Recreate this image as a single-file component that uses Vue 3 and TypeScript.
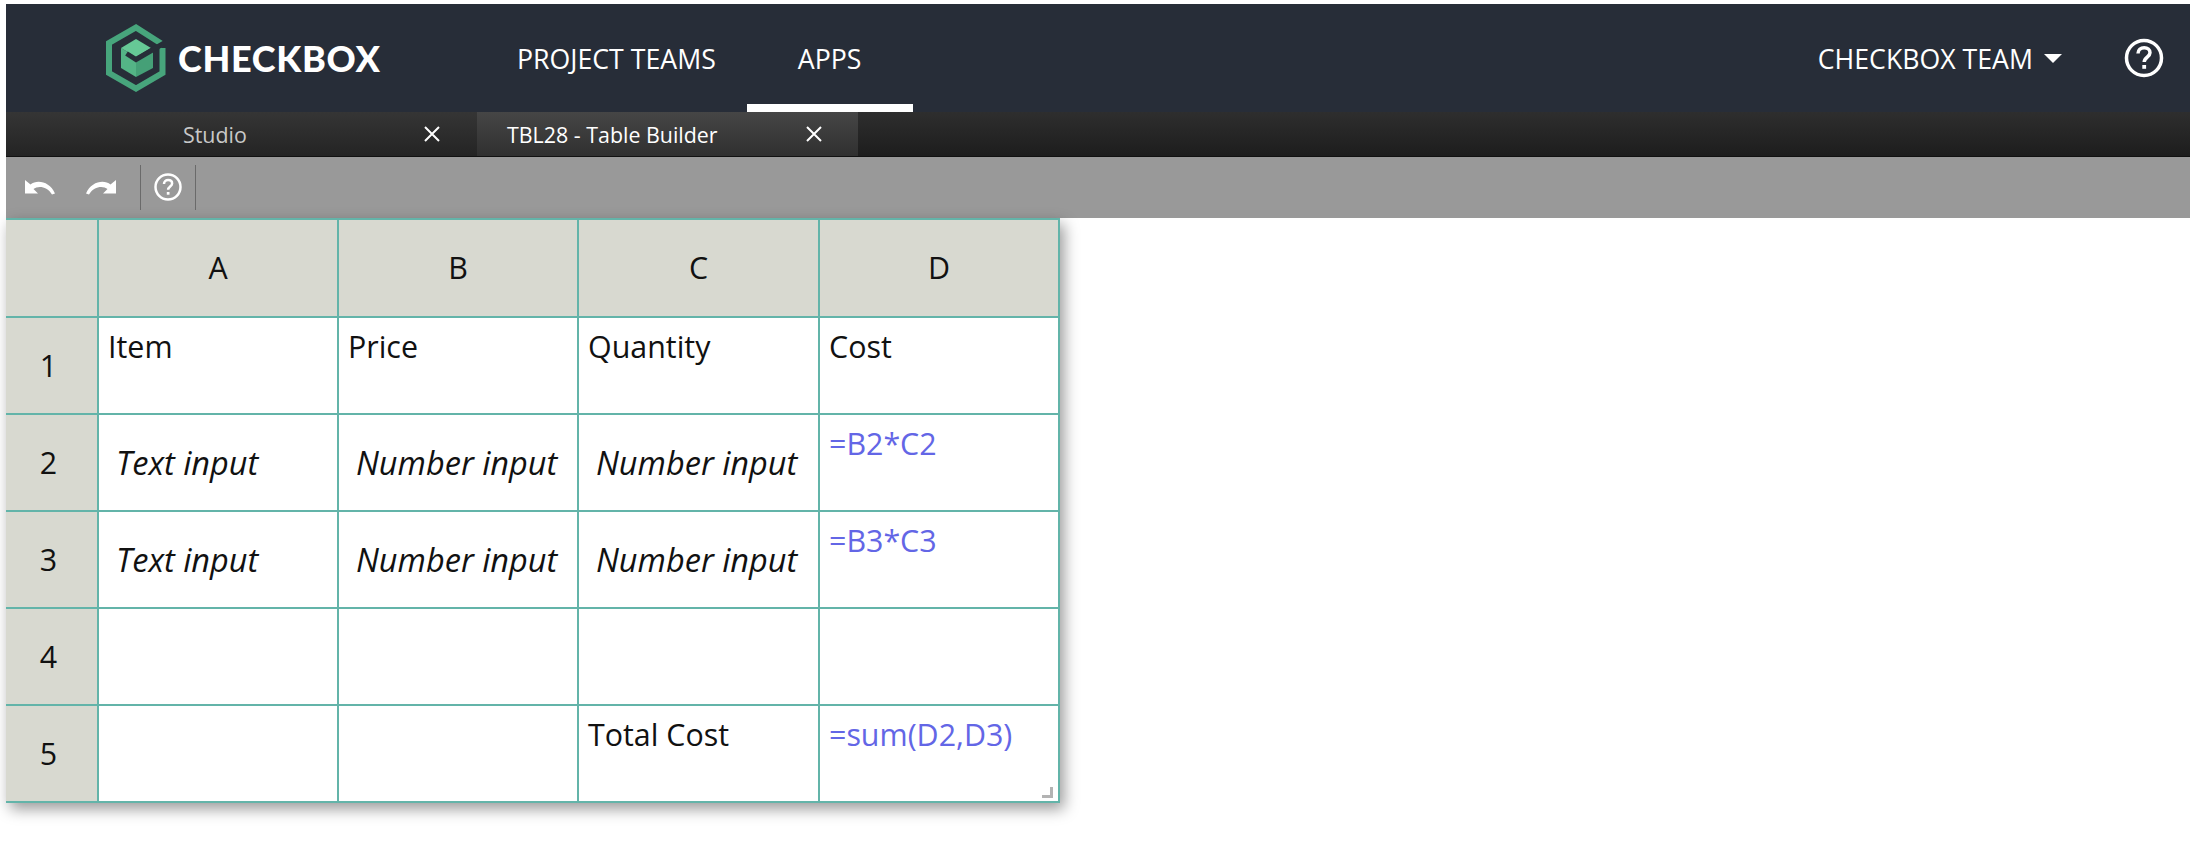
<script setup lang="ts">
type CellKind = "text" | "input" | "formula" | "empty";

interface Cell {
  kind: CellKind;
  value: string;
}

const columns = ["A", "B", "C", "D"];

const t = (value: string): Cell => ({ kind: "text", value });
const i = (value: string): Cell => ({ kind: "input", value });
const f = (value: string): Cell => ({ kind: "formula", value });
const e: Cell = { kind: "empty", value: "" };

const rows: Cell[][] = [
  [t("Item"), t("Price"), t("Quantity"), t("Cost")],
  [i("Text input"), i("Number input"), i("Number input"), f("=B2*C2")],
  [i("Text input"), i("Number input"), i("Number input"), f("=B3*C3")],
  [e, e, e, e],
  [e, e, t("Total Cost"), f("=sum(D2,D3)")],
];
</script>

<template>
  <div class="app">
    <header class="topbar">
      <div class="brand">
        <svg class="logo" viewBox="0 0 60 68" aria-hidden="true">
          <path
            d="M57.500 21 30 3.500 3 19v30l27 15.500L56.500 49V24"
            fill="none"
            stroke="#47a57c"
            stroke-width="6"
          />
          <path fill="#54b486" d="M15 24 30 33v20l-15-9z" />
          <path fill="#45a077" d="M30 33 47 24v20l-17 9z" />
          <path fill="#66c896" d="M30 15 45 24 30 33 15 24z" />
          <path d="M20.500 29.500 30 35.500 60 18" fill="none" stroke="#272d38" stroke-width="5" />
        </svg>
        <span class="brand-name">CHECKBOX</span>
      </div>
      <nav class="nav">
        <a class="nav-link">PROJECT TEAMS</a>
        <a class="nav-link is-active">APPS</a>
      </nav>
      <div class="account">
        <span>CHECKBOX TEAM</span>
        <span class="caret"></span>
      </div>
      <svg class="help-main" viewBox="0 0 40 40" aria-hidden="true">
        <circle cx="20" cy="20" r="17.500" fill="none" stroke="#fff" stroke-width="3.500" />
        <path
          d="M14 15.500c0-3.500 2.600-5.800 6.200-5.800 3.400 0 5.800 2.100 5.800 5 0 4.200-5.800 4.600-5.800 9.300"
          fill="none"
          stroke="#fff"
          stroke-width="3.500"
        />
        <rect x="18.300" y="27" width="3.800" height="3.800" fill="#fff" />
      </svg>
    </header>

    <div class="tabs">
      <div class="tab tab-studio">
        <span class="tab-label">Studio</span>
        <svg class="tab-close" viewBox="0 0 16 16" aria-hidden="true">
          <path d="M1 1l14 14M15 1 1 15" stroke="#fff" stroke-width="2" />
        </svg>
      </div>
      <div class="tab tab-active">
        <span class="tab-label">TBL28 - Table Builder</span>
        <svg class="tab-close" viewBox="0 0 16 16" aria-hidden="true">
          <path d="M1 1l14 14M15 1 1 15" stroke="#fff" stroke-width="2" />
        </svg>
      </div>
    </div>

    <div class="toolbar">
      <svg class="tool-icon undo" viewBox="0 0 30 16" aria-hidden="true">
        <path d="M0 1v13.500h13L8.500 10C13 6.500 22 7 27 15.500l3-1C25 2.500 12 0 5.500 5.500z" fill="#fff" />
      </svg>
      <svg class="tool-icon redo" viewBox="0 0 30 16" aria-hidden="true">
        <path d="M30 1v13.500H17l4.500-4.500C17 6.500 8 7 3 15.500l-3-1C5 2.500 18 0 24.500 5.500z" fill="#fff" />
      </svg>
      <span class="tool-sep"></span>
      <svg class="tool-help" viewBox="0 0 28 28" aria-hidden="true">
        <circle cx="14" cy="14" r="12.500" fill="none" stroke="#fff" stroke-width="2.500" />
        <path
          d="M10 11c0-2.400 1.800-4 4.100-4 2.300 0 4 1.400 4 3.400 0 2.900-4 3.200-4 6.400"
          fill="none"
          stroke="#fff"
          stroke-width="2.500"
        />
        <rect x="12.800" y="19" width="2.700" height="2.700" fill="#fff" />
      </svg>
      <span class="tool-sep"></span>
    </div>

    <div class="sheet">
      <div class="cell head row-head"></div>
      <div v-for="col in columns" :key="col" class="cell head">{{ col }}</div>
      <template v-for="(row, r) in rows" :key="r">
        <div class="cell head row-head">{{ r + 1 }}</div>
        <div v-for="(cell, c) in row" :key="c" class="cell" :class="`is-${cell.kind}`">
          {{ cell.value }}
        </div>
      </template>
      <span class="grip"></span>
    </div>
  </div>
</template>

<style scoped>
.app {
  display: flex;
  flex-direction: column;
  height: 852px;
  padding: 4px 2px 0 6px;
  box-sizing: border-box;
  font-family: "Open Sans", "Noto Sans", sans-serif;
  color: #111;
}

.topbar {
  display: flex;
  align-items: stretch;
  flex: 0 0 108px;
  background: #272d38;
  color: #fff;
}

.brand {
  display: flex;
  align-items: center;
  gap: 12px;
  margin-left: 100px;
  width: 411px;
}

.logo {
  width: 60px;
  height: 68px;
}

.brand-name {
  font-family: Lato, "Open Sans", sans-serif;
  font-weight: 900;
  font-size: 36px;
  letter-spacing: 0.7px;
}

.nav {
  display: flex;
  gap: 31px;
}

.nav-link {
  display: flex;
  align-items: center;
  height: 108px;
  padding-top: 8px;
  box-sizing: border-box;
  font-size: 26.7px;
  border-bottom: 8px solid transparent;
}

.nav-link.is-active {
  padding: 8px 52px 0 51px;
  border-bottom-color: #fff;
}

.account {
  display: flex;
  align-items: center;
  gap: 11px;
  margin-left: auto;
  font-size: 26.7px;
}

.caret {
  width: 0;
  height: 0;
  border-left: 9px solid transparent;
  border-right: 9px solid transparent;
  border-top: 9px solid #fff;
}

.help-main {
  align-self: center;
  width: 40px;
  height: 40px;
  margin: 0 26px 0 62px;
}

.tabs {
  display: flex;
  flex: 0 0 45px;
  background: linear-gradient(#2e2e2e, #1d1d1d);
  border-bottom: 1px solid #111;
  box-sizing: border-box;
}

.tab {
  display: flex;
  align-items: center;
  box-sizing: border-box;
  font-size: 21.4px;
}

.tab-studio {
  width: 471px;
  padding-left: 177px;
  color: #c8c8c8;
  background: linear-gradient(#353535, #242424);
}

.tab-studio .tab-close {
  margin-left: 177px;
}

.tab-active {
  width: 381px;
  padding-left: 30px;
  color: #fff;
  background: linear-gradient(#464646, #303030);
}

.tab-active .tab-close {
  margin-left: 88px;
}

.tab-close {
  width: 16px;
  height: 16px;
}

.toolbar {
  display: flex;
  align-items: center;
  flex: 0 0 61px;
  background: #999;
}

.tool-icon {
  width: 30px;
  height: 16px;
  margin-top: -1px;
}

.undo {
  margin-left: 19px;
}

.redo {
  margin-left: 31px;
}

.tool-sep {
  width: 1px;
  height: 45px;
  margin-top: -1px;
  background: #6a6a6a;
}

.redo + .tool-sep {
  margin-left: 24px;
}

.tool-help {
  width: 28px;
  height: 28px;
  margin: -2px 13px 0 13px;
}

.sheet {
  position: relative;
  display: grid;
  grid-template-columns: 93px 240px 240px 241px 240px;
  grid-template-rows: 98px repeat(5, 97px);
  width: 1054px;
  box-sizing: border-box;
  border-top: 2px solid #63b4a9;
  box-shadow: 4px 6px 14px rgba(0, 0, 0, 0.4);
  background: #fff;
  font-size: 30.4px;
}

.cell {
  box-sizing: border-box;
  border-right: 2px solid #63b4a9;
  border-bottom: 2px solid #63b4a9;
  padding: 0 9px;
  line-height: 44px;
  white-space: nowrap;
}

.head {
  display: flex;
  align-items: center;
  justify-content: center;
  background: #d8d9d0;
}

.row-head {
  padding: 0 11px 0 5px;
}

.is-text,
.is-formula {
  padding-top: 7px;
}

.is-formula {
  color: #6366e6;
}

.is-input {
  display: flex;
  align-items: center;
  padding: 0 17px;
  font-style: italic;
  font-size: 32.5px;
}

.grip {
  position: absolute;
  right: 7px;
  bottom: 5px;
  width: 11px;
  height: 11px;
  border-right: 3px solid #b3b3b3;
  border-bottom: 3px solid #b3b3b3;
  box-sizing: border-box;
}
</style>

<style>
html,
body {
  background: #fff;
}
</style>
